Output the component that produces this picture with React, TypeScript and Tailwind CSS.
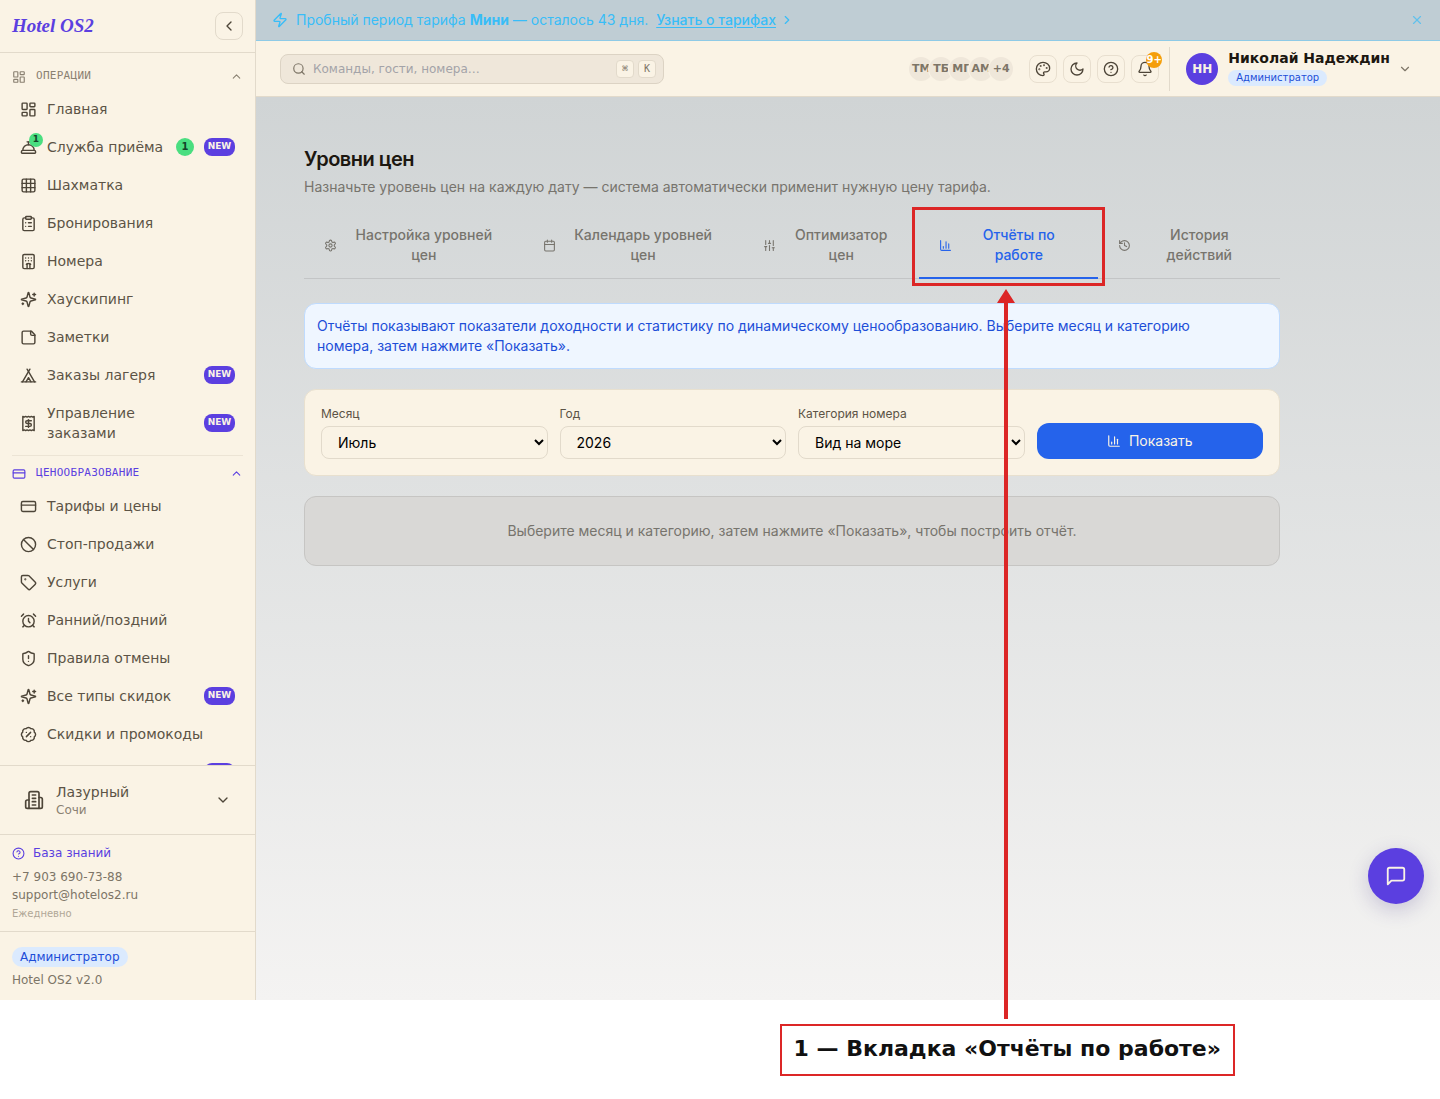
import React, { useState } from 'react';
import {
  AlarmClock,
  BadgePercent,
  Ban,
  Bell,
  Calendar,
  ChartColumn,
  ChevronDown,
  ChevronLeft,
  ChevronRight,
  ChevronUp,
  CircleHelp,
  ClipboardList,
  ConciergeBell,
  CreditCard,
  Grid3x3,
  History,
  Hotel,
  LayoutDashboard,
  Search,
  ShieldAlert,
  SlidersVertical,
  Tag,
  Tent,
  X,
  Zap,
  createLucideIcon,
  type LucideIcon,
} from 'lucide-react';

// Custom variants of the stock icons
const Sparkles = createLucideIcon('sparkles-plus', [
  ['path', { key: 'a', d: 'M9.937 15.5A2 2 0 0 0 8.5 14.063l-6.135-1.582a.5.5 0 0 1 0-.962L8.5 9.936A2 2 0 0 0 9.937 8.5l1.582-6.135a.5.5 0 0 1 .963 0L14.063 8.5A2 2 0 0 0 15.5 9.937l6.135 1.581a.5.5 0 0 1 0 .964L15.5 14.063a2 2 0 0 0-1.437 1.437l-1.582 6.135a.5.5 0 0 1-.963 0z' }],
  ['path', { key: 'b', d: 'M20 3v4M22 5h-4M4 17v2M5 18H3' }],
]);
const StickyNote = createLucideIcon('sticky-note-fold', [
  ['path', { key: 'a', d: 'M16 3H5a2 2 0 0 0-2 2v14a2 2 0 0 0 2 2h14a2 2 0 0 0 2-2V8Z' }],
  ['path', { key: 'b', d: 'M15 3v4a2 2 0 0 0 2 2h4' }],
]);
const Receipt = createLucideIcon('receipt-dollar', [
  ['path', { key: 'a', d: 'M4 2v20l2-1 2 1 2-1 2 1 2-1 2 1 2-1 2 1V2l-2 1-2-1-2 1-2-1-2 1-2-1-2 1Z' }],
  ['path', { key: 'b', d: 'M16 8h-6a2 2 0 1 0 0 4h4a2 2 0 1 1 0 4H8' }],
  ['path', { key: 'c', d: 'M12 17.5v-11' }],
]);
const Building = createLucideIcon('building-wings', [
  ['path', { key: 'a', d: 'M6 22V4a2 2 0 0 1 2-2h8a2 2 0 0 1 2 2v18Z' }],
  ['path', { key: 'b', d: 'M6 12H4a2 2 0 0 0-2 2v6a2 2 0 0 0 2 2h2' }],
  ['path', { key: 'c', d: 'M18 9h2a2 2 0 0 1 2 2v9a2 2 0 0 1-2 2h-2' }],
  ['path', { key: 'd', d: 'M10 6h4M10 10h4M10 14h4M10 18h4' }],
]);
const Settings = createLucideIcon('settings-gear', [
  ['path', { key: 'a', d: 'M12.22 2h-.44a2 2 0 0 0-2 2v.18a2 2 0 0 1-1 1.73l-.43.25a2 2 0 0 1-2 0l-.15-.08a2 2 0 0 0-2.73.73l-.22.38a2 2 0 0 0 .73 2.73l.15.1a2 2 0 0 1 1 1.72v.51a2 2 0 0 1-1 1.74l-.15.09a2 2 0 0 0-.73 2.73l.22.38a2 2 0 0 0 2.73.73l.15-.08a2 2 0 0 1 2 0l.43.25a2 2 0 0 1 1 1.73V20a2 2 0 0 0 2 2h.44a2 2 0 0 0 2-2v-.18a2 2 0 0 1 1-1.73l.43-.25a2 2 0 0 1 2 0l.15.08a2 2 0 0 0 2.73-.73l.22-.39a2 2 0 0 0-.73-2.73l-.15-.08a2 2 0 0 1-1-1.74v-.5a2 2 0 0 1 1-1.74l.15-.09a2 2 0 0 0 .73-2.73l-.22-.38a2 2 0 0 0-2.73-.73l-.15.08a2 2 0 0 1-2 0l-.43-.25a2 2 0 0 1-1-1.73V4a2 2 0 0 0-2-2z' }],
  ['circle', { key: 'b', cx: '12', cy: '12', r: '3' }],
]);
const Palette = createLucideIcon('palette-round', [
  ['path', { key: 'a', d: 'M12 2C6.5 2 2 6.5 2 12s4.5 10 10 10c.926 0 1.648-.746 1.648-1.688 0-.437-.18-.835-.437-1.125-.29-.289-.438-.652-.438-1.125a1.64 1.64 0 0 1 1.668-1.668h1.996c3.051 0 5.555-2.503 5.555-5.554C21.965 6.012 17.461 2 12 2z' }],
  ['circle', { key: 'b', cx: '13.5', cy: '6.5', r: '.5' }],
  ['circle', { key: 'c', cx: '17.5', cy: '10.5', r: '.5' }],
  ['circle', { key: 'd', cx: '8.5', cy: '7.5', r: '.5' }],
  ['circle', { key: 'e', cx: '6.5', cy: '12.5', r: '.5' }],
]);
const Moon = createLucideIcon('moon-round', [['path', { key: 'a', d: 'M12 3a6 6 0 0 0 9 9 9 9 0 1 1-9-9Z' }]]);
const Message = createLucideIcon('message-corner', [
  ['path', { key: 'a', d: 'M21 15a2 2 0 0 1-2 2H7l-4 4V5a2 2 0 0 1 2-2h14a2 2 0 0 1 2 2z' }],
]);

type NavItem = { label: string; icon: LucideIcon; isNew?: boolean; count?: number };
type NavSection = { title: string; icon: LucideIcon; active?: boolean; items: NavItem[] };

const sections: NavSection[] = [
  {
    title: 'ОПЕРАЦИИ',
    icon: LayoutDashboard,
    items: [
      { label: 'Главная', icon: LayoutDashboard },
      { label: 'Служба приёма', icon: ConciergeBell, count: 1, isNew: true },
      { label: 'Шахматка', icon: Grid3x3 },
      { label: 'Бронирования', icon: ClipboardList },
      { label: 'Номера', icon: Hotel },
      { label: 'Хаускипинг', icon: Sparkles },
      { label: 'Заметки', icon: StickyNote },
      { label: 'Заказы лагеря', icon: Tent, isNew: true },
      { label: 'Управление заказами', icon: Receipt, isNew: true },
    ],
  },
  {
    title: 'ЦЕНООБРАЗОВАНИЕ',
    icon: CreditCard,
    active: true,
    items: [
      { label: 'Тарифы и цены', icon: CreditCard },
      { label: 'Стоп-продажи', icon: Ban },
      { label: 'Услуги', icon: Tag },
      { label: 'Ранний/поздний', icon: AlarmClock },
      { label: 'Правила отмены', icon: ShieldAlert },
      { label: 'Все типы скидок', icon: Sparkles, isNew: true },
      { label: 'Скидки и промокоды', icon: BadgePercent },
    ],
  },
];

const tabs: { label: string; icon: LucideIcon }[] = [
  { label: 'Настройка уровней цен', icon: Settings },
  { label: 'Календарь уровней цен', icon: Calendar },
  { label: 'Оптимизатор цен', icon: SlidersVertical },
  { label: 'Отчёты по работе', icon: ChartColumn },
  { label: 'История действий', icon: History },
];

const team = ['ТМ', 'ТБ', 'МГ', 'АМ', '+4'];

const months = [
  'Январь', 'Февраль', 'Март', 'Апрель', 'Май', 'Июнь',
  'Июль', 'Август', 'Сентябрь', 'Октябрь', 'Ноябрь', 'Декабрь',
];

function SidebarItem({ item }: { item: NavItem }) {
  const Icon = item.icon;
  return (
    <a href="#" className="flex items-center gap-2.5 rounded-lg px-2 py-2 text-sm text-[#5c5346]">
      <span className="relative shrink-0">
        <Icon size={17} strokeWidth={2} className="text-[#4d4538]" />
        {item.count && (
          <span className="absolute -top-1.5 -right-1.5 flex size-3.5 items-center justify-center rounded-full bg-[#4ade80] text-[9px] leading-none font-bold text-[#14432a]">
            {item.count}
          </span>
        )}
      </span>
      <span className="flex-1">{item.label}</span>
      {item.count && (
        <span className="flex size-[18px] items-center justify-center rounded-full bg-[#4ade80] text-[10px] font-bold text-[#14432a]">
          {item.count}
        </span>
      )}
      {item.isNew && (
        <span className="h-[18px] w-[31px] rounded-lg bg-[#5b3fe0] text-center text-[9px] leading-4 font-bold text-[#faf3e5]">
          NEW
        </span>
      )}
    </a>
  );
}

function Sidebar() {
  return (
    <aside className="flex w-64 shrink-0 flex-col border-r border-[#e2dacb] bg-[#faf3e5]">
      <div className="flex h-[53px] shrink-0 items-center justify-between border-b border-[#e2dacb] px-3">
        <span className="font-['Liberation_Serif',serif] text-[19px] font-bold text-[#5b3fe0] italic">Hotel OS2</span>
        <button
          aria-label="Свернуть меню"
          className="flex size-7 items-center justify-center rounded-lg border border-[#e2dacb] text-[#4d4538]"
        >
          <ChevronLeft size={16} />
        </button>
      </div>

      <nav className="min-h-0 flex-1 overflow-hidden px-3 pt-1.5">
        {sections.map((section, i) => (
          <div key={section.title} className={i > 0 ? 'mt-1 border-t border-[#ece4d5] pt-1' : 'pt-1'}>
            <button
              className={`flex h-[27px] w-full items-center gap-2.5 font-['DejaVu_Sans_Mono',monospace] text-[11px] tracking-wide ${
                section.active ? 'text-[#5b3fe0]' : 'text-[#8a8172]'
              }`}
            >
              <section.icon size={14} />
              <span className="flex-1 text-left">{section.title}</span>
              <ChevronUp size={13} />
            </button>
            <div className="mt-px flex flex-col gap-0.5">
              {section.items.map((item) => (
                <SidebarItem key={item.label} item={item} />
              ))}
            </div>
          </div>
        ))}
        {/* Badge of the next row, peeking out from under the footer */}
        <div className="mt-0.5 flex justify-end px-2 py-[9px]">
          <span className="h-[18px] w-[31px] rounded-lg bg-[#5b3fe0]" />
        </div>
      </nav>

      <div className="shrink-0 border-t border-[#e2dacb] px-3 py-3">
        <button className="flex h-11 w-full items-center gap-3 px-3 text-left">
          <Building size={20} className="text-[#4d4538]" />
          <span className="flex-1">
            <span className="block text-sm leading-5 text-[#5c5346]">Лазурный</span>
            <span className="block text-xs text-[#8a8172]">Сочи</span>
          </span>
          <ChevronDown size={16} className="text-[#4d4538]" />
        </button>
      </div>

      <div className="shrink-0 border-t border-[#e2dacb] px-3 py-2 text-xs text-[#7d7567]">
        <a href="#" className="flex h-5 items-center gap-2 text-[#5b3fe0]">
          <CircleHelp size={13} />
          База знаний
        </a>
        <a href="tel:+79036907388" className="mt-[5px] block leading-[18px]">+7 903 690-73-88</a>
        <a href="mailto:support@hotelos2.ru" className="block leading-[18px]">support@hotelos2.ru</a>
        <p className="mt-px text-[10px] leading-[18px] text-[#b0a797]">Ежедневно</p>
      </div>

      <div className="flex shrink-0 flex-col items-start gap-[5px] border-t border-[#e2dacb] px-3 pt-[15px] pb-3 text-xs text-[#7d7567]">
        <span className="rounded-full bg-[#dbeafe] px-2 py-0.5 text-[#1d4ed8]">Администратор</span>
        <p>Hotel OS2 v2.0</p>
      </div>
    </aside>
  );
}

function TrialBanner() {
  return (
    <div className="flex h-[41px] shrink-0 items-center border-b border-[#8ecae6] bg-[#bfcdd4] px-4 font-[Inter,sans-serif] text-sm text-[#38bdf8]">
      <Zap size={16} />
      <span className="ml-2">
        Пробный период тарифа <b>Мини</b> — осталось 43 дня.
      </span>
      <a href="#" className="ml-2 flex items-center gap-1 font-medium">
        <span className="underline underline-offset-2">Узнать о тарифах</span>
        <ChevronRight size={14} />
      </a>
      <button aria-label="Закрыть" className="ml-auto opacity-70">
        <X size={14} />
      </button>
    </div>
  );
}

function IconButton({ label, icon: Icon, badge }: { label: string; icon: LucideIcon; badge?: string }) {
  return (
    <button
      aria-label={label}
      className="relative flex size-7 items-center justify-center rounded-lg border border-[#e8dfcf] text-[#4d4538]"
    >
      <Icon size={16} />
      {badge && (
        <span className="absolute -top-1 -right-1 flex size-4 items-center justify-center rounded-full bg-[#f59e0b] text-[10px] leading-none font-bold text-white">
          {badge}
        </span>
      )}
    </button>
  );
}

function Header() {
  return (
    <header className="flex h-14 shrink-0 items-center border-b border-[#e2dacb] bg-[#faf3e5] px-6">
      <label className="flex h-[30px] w-96 items-center gap-1 rounded-lg border border-[#dcd3c4] bg-[#efe7da] pr-[7px] pl-[11px] text-[#7d7567]">
        <Search size={14} className="shrink-0" />
        <input
          type="text"
          aria-label="Поиск"
          placeholder="Команды, гости, номера…"
          className="min-w-0 flex-1 bg-transparent px-[3px] text-xs outline-none placeholder:text-[#a3a3a8]"
        />
        <kbd className="flex size-[18px] items-center justify-center rounded border border-[#e2dacb] bg-[#faf3e5] font-['DejaVu_Sans_Mono',monospace] text-[10px]">
          ⌘
        </kbd>
        <kbd className="flex size-[18px] items-center justify-center rounded border border-[#e2dacb] bg-[#faf3e5] font-['DejaVu_Sans_Mono',monospace] text-[10px]">
          K
        </kbd>
      </label>

      <div className="ml-auto flex -space-x-1">
        {team.map((name) => (
          <span
            key={name}
            className="flex size-6 items-center justify-center rounded-full bg-[#efe7da] text-[11px] leading-6 font-bold text-[#7d7567] ring-1 ring-[#faf3e5]"
          >
            {name}
          </span>
        ))}
      </div>

      <div className="ml-4 flex gap-1.5">
        <IconButton label="Тема" icon={Palette} />
        <IconButton label="Тёмный режим" icon={Moon} />
        <IconButton label="Справка" icon={CircleHelp} />
        <IconButton label="Уведомления" icon={Bell} badge="9+" />
      </div>

      <button className="ml-2.5 flex h-11 items-center gap-2 border-l border-[#e2dacb] pr-1 pl-4 text-left">
        <span className="mr-0.5 flex size-8 items-center justify-center rounded-full bg-[#5b3fe0] text-xs font-bold text-[#faf3e5]">
          НН
        </span>
        <span className="pb-1">
          <span className="block text-sm leading-5 font-bold text-[#1c1710]">Николай Надеждин</span>
          <span className="mt-0.5 block w-fit rounded-full bg-[#dbeafe] px-2 text-[10px] leading-4 text-[#1d4ed8]">
            Администратор
          </span>
        </span>
        <ChevronDown size={14} className="text-[#7d7567]" />
      </button>
    </header>
  );
}

function Field({ label, value, options }: { label: string; value: string; options: string[] }) {
  return (
    <label className="flex flex-col gap-1 text-xs text-[#5c5346]">
      {label}
      <select
        defaultValue={value}
        className="h-[33px] w-full rounded-lg border border-[#e2dacb] bg-[#faf3e5] px-3 text-sm text-black"
      >
        {options.map((option) => (
          <option key={option}>{option}</option>
        ))}
      </select>
    </label>
  );
}

function PriceLevels() {
  const [active, setActive] = useState(3);

  return (
    <main className="relative min-h-0 flex-1 bg-linear-to-b from-[#d0d4d5] to-[#f4f3f2] p-6 font-[Inter,sans-serif] text-sm">
      <div className="max-w-5xl p-6">
        <h1 className="text-xl font-semibold tracking-tight text-[#1c1710]">Уровни цен</h1>
        <p className="mt-1 text-[#77746d]">
          Назначьте уровень цен на каждую дату — система автоматически применит нужную цену тарифа.
        </p>

        <div role="tablist" className="mt-4 flex border-b border-[#c3c5c6]">
          {tabs.map((tab, i) => (
            <button
              key={tab.label}
              role="tab"
              aria-selected={i === active}
              onClick={() => setActive(i)}
              className={`relative -mb-px flex items-center gap-2 border-b-2 px-5 py-3 font-medium ${
                i === active ? 'border-[#2563eb] text-[#2563eb]' : 'border-transparent text-[#77746d]'
              }`}
            >
              <tab.icon size={13} className="shrink-0" />
              <span className="flex-1">{tab.label}</span>
              {i === 3 && <span className="absolute -inset-x-[7px] -top-1.5 -bottom-[9px] border-3 border-[#dc2626]" />}
            </button>
          ))}
        </div>

        <div className="mt-6 rounded-xl border border-[#bfdbfe] bg-[#eff6ff] py-3 pr-10 pl-3 text-[#1d4ed8]">
          Отчёты показывают показатели доходности и статистику по динамическому ценообразованию. Выберите месяц и
          категорию номера, затем нажмите «Показать».
        </div>

        <form className="mt-5 grid grid-cols-4 items-end gap-3 rounded-xl border border-[#e8e0cf] bg-[#faf3e5] p-4">
          <Field label="Месяц" value="Июль" options={months} />
          <Field label="Год" value="2026" options={['2025', '2026', '2027']} />
          <Field label="Категория номера" value="Вид на море" options={['Стандарт', 'Вид на море', 'Люкс']} />
          <button
            type="button"
            className="flex h-9 items-center justify-center gap-2 rounded-xl bg-[#2563eb] text-[#faf3e5]"
          >
            <ChartColumn size={14} />
            Показать
          </button>
        </form>

        <div className="mt-5 rounded-xl border border-[#c6c5c3] bg-[#d9d8d6] p-6 text-center text-[#77746d]">
          Выберите месяц и категорию, затем нажмите «Показать», чтобы построить отчёт.
        </div>
      </div>

      <button
        aria-label="Чат"
        className="absolute right-4 bottom-24 flex size-14 items-center justify-center rounded-full bg-[#5b3fe0] text-[#faf3e5] shadow-[0_6px_20px_rgba(60,45,130,0.22)]"
      >
        <Message size={22} />
      </button>
    </main>
  );
}

export default function App() {
  return (
    <div className="flex h-screen flex-col overflow-hidden bg-white font-['DejaVu_Sans',sans-serif]">
      <div className="flex min-h-0 flex-1">
        <Sidebar />
        <div className="flex min-w-0 flex-1 flex-col">
          <TrialBanner />
          <Header />
          <PriceLevels />
        </div>
      </div>

      {/* Caption with an arrow up to the highlighted tab */}
      <div className="flex shrink-0 justify-end pt-6 pr-[205px] pb-[23px]">
        <div className="relative border-2 border-[#dc2626] px-3 pt-[7px] pb-[9px] text-[22px] leading-8 font-bold text-[#111]">
          1 — Вкладка «Отчёты по работе»
          <svg
            className="absolute bottom-full left-[214px] mb-[7px] h-[730px] w-5 text-[#dc2626]"
            viewBox="0 0 20 730"
            fill="currentColor"
          >
            <path d="M10 0 L19 14 H12 V730 H8 V14 H1 Z" />
          </svg>
        </div>
      </div>
    </div>
  );
}
